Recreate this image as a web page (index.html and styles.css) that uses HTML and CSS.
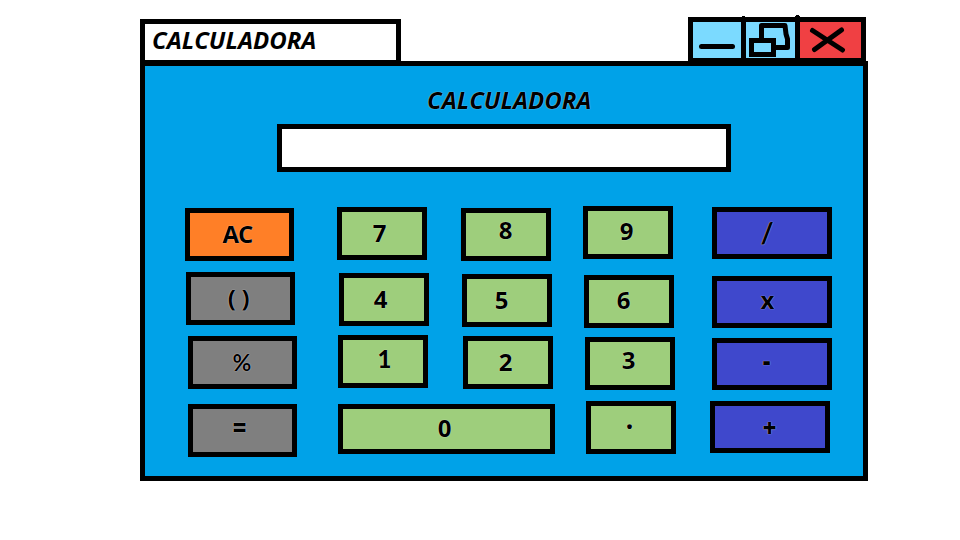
FILE: index.html
```
<!DOCTYPE html>
<html lang="es">
<head>
<meta charset="utf-8">
<title>Calculadora</title>
<link rel="stylesheet" href="styles.css">
</head>
<body>
<main class="window">
  <header class="bar">
    <div class="tab">CALCULADORA</div>
    <svg class="controls" width="178" height="46" viewBox="688 15 178 46">
      <path fill="#000" d="M688 17H866V61H688ZM742 16h3v2h-3ZM796 15h3v1h1v2h-5v-2h1Z"/>
      <path fill="#7bdaff" d="M693 22h48v36h-48ZM746 22h49v36h-49Z"/>
      <path fill="#f04043" d="M800 22h61v36h-61Z"/>
      <g fill="none" stroke="#000" stroke-width="5">
        <path stroke-linecap="round" d="M701.5 46.5H732.5"/>
        <path stroke-linejoin="round" d="M761.5 39V25.5H785L786 34L787.5 39V47.5H775"/>
        <path d="M751.5 40.5H773.5V54.5H751.5Z"/>
        <path stroke-linecap="round" d="M812.5 30.5L842.5 50M841.5 30L814.5 49.5"/>
      </g>
    </svg>
  </header>
  <section class="panel">
    <h1 class="title">CALCULADORA</h1>
    <div class="display"></div>
    <div class="keys">
      <button class="key fn ac"><span>AC</span></button>
      <button class="key n7"><span>7</span></button>
      <button class="key n8"><span>8</span></button>
      <button class="key n9"><span>9</span></button>
      <button class="key op div"><span>/</span></button>
      <button class="key fn par"><span>( )</span></button>
      <button class="key n4"><span>4</span></button>
      <button class="key n5"><span>5</span></button>
      <button class="key n6"><span>6</span></button>
      <button class="key op mul"><span>x</span></button>
      <button class="key fn pct"><span>%</span></button>
      <button class="key n1"><span>1</span></button>
      <button class="key n2"><span>2</span></button>
      <button class="key n3"><span>3</span></button>
      <button class="key op sub"><span>-</span></button>
      <button class="key fn eq"><span>=</span></button>
      <button class="key n0"><span>0</span></button>
      <button class="key dot"><span>·</span></button>
      <button class="key op add"><span>+</span></button>
    </div>
  </section>
</main>
</body>
</html>
```
FILE: styles.css
```
* { box-sizing: border-box; }
body { margin: 0; background: #fff; color: #000; font-family: "Open Sans", sans-serif; }
.window { width: 728px; margin-left: 140px; padding-top: 15px; }
.bar { display: flex; justify-content: space-between; align-items: flex-end; height: 46px; padding-right: 2px; }
.tab {
  width: 261px; height: 42px; border: 5px solid #000; border-bottom-width: 1px;
  padding-left: 7px; font-size: 24px; font-weight: 700; font-style: italic; font-stretch: 92%;
  line-height: 32px; background: #fff;
}
.controls { display: block; }
.panel { height: 420px; border: 5px solid #000; background: #00a2e8; }
.title {
  margin: 18px 0 0 282px; height: 40px; font-size: 24px; line-height: 32px; font-stretch: 92%;
  font-weight: 700; font-style: italic; text-shadow: 0 0 1px #fff;
}
.display { width: 454px; height: 48px; margin-left: 132px; border: 5px solid #000; background: #fff; }
.keys {
  display: grid; grid-template-columns: 152px 124px 122px 127px 122px;
  grid-template-rows: 66px 63px 66px 56px; margin: 34px 0 0 40px;
}
.key {
  display: flex; align-items: flex-start; width: 90px; height: 53px;
  margin: var(--y) 0 0 var(--x); padding: 0;
  border: 5px solid #000; border-radius: 0; background: #9ece7c; color: #000;
  font: 700 24px/30px "Open Sans", sans-serif; font-stretch: 90%; text-shadow: 0 0 1px #fff;
}
.key span { width: 40px; height: 30px; margin: var(--ty) 0 0 var(--tx); text-align: center; white-space: nowrap; }
.fn { width: 109px; background: #7f7f7f; }
.op { width: 120px; height: 52px; background: #3f48cc; }
.ac { --x: 0px; --y: 2px; --tx: 27.5px; --ty: 6px; background: #ff7f27; letter-spacing: -1px; }
.par { --x: 1px; --y: 0px; --tx: 27.5px; --ty: 6px; font-size: 24px; letter-spacing: -0.3px; }
.pct { --x: 3px; --y: 1px; --tx: 29px; --ty: 6px; font-family: Lato, "Open Sans", sans-serif; font-size: 23px; }
.eq { --x: 3px; --y: 3px; --tx: 26.5px; --ty: 3px; font-weight: 800; }
.n7 { --x: 0px; --y: 1px; --tx: 17.5px; --ty: 6px; }
.n8 { --x: 0px; --y: 2px; --tx: 19.5px; --ty: 2px; }
.n9 { --x: 0px; --y: 0px; --tx: 18.5px; --ty: 5px; }
.n4 { --x: 2px; --y: 1px; --tx: 16.5px; --ty: 6px; }
.n5 { --x: 1px; --y: 2px; --tx: 14.5px; --ty: 6px; }
.n6 { --x: 1px; --y: 3px; --tx: 14.5px; --ty: 5px; }
.n1 { --x: 1px; --y: 0px; --tx: 21.5px; --ty: 4px; font-family: Lato, "Open Sans", sans-serif; font-weight: 900; }
.n2 { --x: 2px; --y: 1px; --tx: 17.5px; --ty: 6px; }
.n3 { --x: 2px; --y: 2px; --tx: 18.5px; --ty: 3px; }
.n0 { --x: 1px; --y: 3px; --tx: 81.5px; --ty: 4px; grid-column: span 2; width: 217px; height: 50px; }
.dot { --x: 3px; --y: 0px; --tx: 18.5px; --ty: 5px; font-size: 28px; }
.div { --x: 2px; --y: 1px; --tx: 30px; --ty: 5px; font-family: Lato, "Open Sans", sans-serif; font-size: 28px; font-weight: 900; }
.mul { --x: 2px; --y: 4px; --tx: 30.5px; --ty: 4px; }
.sub { --x: 2px; --y: 3px; --tx: 29.5px; --ty: 3px; font-weight: 800; }
.add { --x: 0px; --y: 0px; --tx: 34.5px; --ty: 7px; font-weight: 800; }
```
